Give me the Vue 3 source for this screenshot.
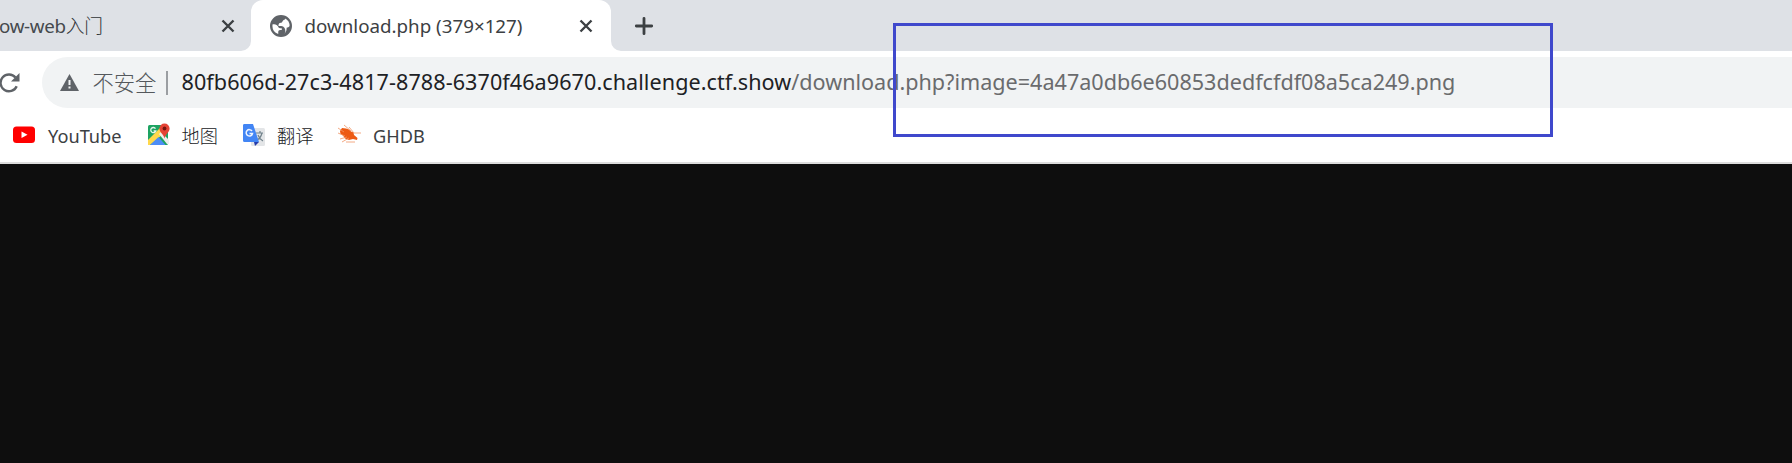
<script setup>
const bookmarks = [
  { id: 'youtube', label: 'YouTube' },
  { id: 'maps', label: '地图' },
  { id: 'translate', label: '翻译' },
  { id: 'ghdb', label: 'GHDB' },
]
</script>

<template>
  <div class="browser">
    <header class="tabs">
      <div class="tab inactive">
        <span class="title prev">ow-web<span class="cjk">入门</span></span>
        <svg class="close" viewBox="0 0 14 14"><path d="M1.500 1.500l11 11M12.500 1.500l-11 11" /></svg>
      </div>
      <div class="tab active">
        <svg class="curve left" viewBox="0 0 10 10"><path d="M10 0V10H0A10 10 0 0 0 10 0Z" /></svg>
        <svg class="globe" viewBox="2 2 20 20"><path d="M12 2a10 10 0 1 0 0 20 10 10 0 0 0 0-20ZM4.200 12c0-.6.100-1.200.2-1.700 2 0 3.300 0 4.600 1.700.8 1 .6 2 2.300 2h1.400v1.700c-1.800 0-3.200.2-3.200 1.500v2.100A7.800 7.800 0 0 1 4.200 12Zm9.400 7.600c1.200-.2 2.400-1.200 2.400-2.800 0-2.600-1.200-4.600-3.800-4.800h-2.500c0-2 .6-2.800 2.200-2.900 1.700 0 1.300-1.900 2.500-2.500.8-.4 1.500-.4 1.500-1.400A7.800 7.800 0 0 1 19.800 12c-.7 1-1.600 1.500-2.700 1.500 0 2.500-.4 4.700-3.500 6.100Z" /></svg>
        <span class="title current">download.php (379×127)</span>
        <svg class="close" viewBox="0 0 14 14"><path d="M1.500 1.500l11 11M12.500 1.500l-11 11" /></svg>
        <svg class="curve right" viewBox="0 0 10 10"><path d="M0 0V10H10A10 10 0 0 1 0 0Z" /></svg>
      </div>
      <svg class="plus" viewBox="0 0 18 18"><path d="M9 1.300V16.700M1.300 9H16.700" /></svg>
    </header>

    <div class="toolbar">
      <svg class="reload" viewBox="0 0 22 22"><path class="arc" d="M18.700 14.200A8.400 8.400 0 1 1 17.500 5.600" /><path class="tip" d="M21.500 1V9.500H13Z" /></svg>
      <div class="omnibox">
        <svg class="warning" viewBox="0 0 19 17"><path d="M9.500 0L19 17H0Z" /><path class="mark" d="M8.500 6h2v5h-2ZM8.500 12.500h2v2h-2Z" /></svg>
        <span class="insecure">不安全</span>
        <i class="divider"></i>
        <span class="url"><span class="host">80fb606d-27c3-4817-8788-6370f46a9670.challenge.ctf.show</span><span class="path">/download.php?image=4a47a0db6e60853dedfcfdf08a5ca249.png</span></span>
      </div>
    </div>

    <nav class="bookmarks">
      <div v-for="b in bookmarks" :key="b.id" class="bookmark" :class="b.id">
        <svg v-if="b.id === 'youtube'" viewBox="0 0 24 24"><rect x="1" y="3.500" width="22" height="16.500" rx="3.500" fill="#f00" /><path d="M9.500 8.400L15.500 11.700L9.500 15Z" fill="#fff" /></svg>
        <svg v-else-if="b.id === 'maps'" viewBox="0 0 24 24">
          <rect x="1" y="2" width="20" height="20" rx="1.500" fill="#1da362" />
          <path d="M1 17L16 2H21V7L3 22H1Z" fill="#ffd84b" />
          <path d="M12 11L14 9L22 17V21H20Z" fill="#eee" />
          <path d="M3 22L11.500 14L18.500 22Z" fill="#4d8df6" />
          <path d="M8.500 5.600A2.600 2.600 0 1 0 8.800 8H6.600" fill="none" stroke="#e4f6ec" stroke-width="1.300" />
          <path d="M17.500 .5a5.100 5.100 0 0 0-5.100 5.100c0 3.800 4 5.400 5.100 9.900 1.100-4.500 5.100-6.100 5.100-9.900A5.100 5.100 0 0 0 17.500.5Z" fill="#e54335" />
          <circle cx="17.500" cy="5.500" r="1.900" fill="#74150f" />
        </svg>
        <svg v-else-if="b.id === 'translate'" viewBox="0 0 24 24">
          <rect x="9" y="5" width="14" height="18" rx="1.500" fill="#e3e5e7" />
          <path d="M14 10h7M18 8v2M20 10c-1 4-3 6-5 7M16 12c1 3 3 5 5 6" fill="none" stroke="#71828b" stroke-width="1.200" />
          <path d="M12 19H17L13 23Z" fill="#263caa" />
          <path d="M2 1H11L17 19H2.500A1.500 1.500 0 0 1 1 17.500V2.500A1.500 1.500 0 0 1 2 1Z" fill="#4285f4" />
          <path d="M10 8A3.200 3.200 0 1 0 10.500 10.500H7.500" fill="none" stroke="#edf4ff" stroke-width="1.500" />
        </svg>
        <svg v-else viewBox="0 0 24 24">
          <path d="M3 8L5 5L9 5.500L12 6.500L14 8.500L16.500 9.500L17 12L20.500 15L20 17L16 16L12 17L8 15.500L6 12.500L3.500 11Z" fill="#ed5a13" />
          <path d="M1 5L7 9M7 2L14 8M12 4L17 10H24M1 10L8 13M3 16L10 14M5 19L12 15M9 19H18" fill="none" stroke="#f09465" stroke-width=".8" />
        </svg>
        <span>{{ b.label }}</span>
      </div>
    </nav>
    <main class="viewport"></main>
    <div class="highlight"></div>
  </div>
</template>

<style>
body { overflow: hidden; }
</style>

<style scoped>
* { box-sizing: border-box; }
.browser {
  position: relative;
  width: 1792px;
  height: 463px;
  display: flex;
  flex-direction: column;
  overflow: hidden;
  background: #fff;
  font-family: "Noto Sans", "Open Sans", "Noto Sans CJK SC", sans-serif;
  color: #3c4043;
  white-space: nowrap;
}
svg { display: block; flex: none; overflow: visible; }
.tabs { display: flex; height: 51px; flex: none; background: #dee1e6; }
.tab { display: flex; align-items: center; height: 51px; position: relative; }
.inactive { width: 251px; }
.active { width: 360px; background: #fff; border-radius: 12px 12px 0 0; padding-left: 19px; }
.title { font-size: 18.75px; line-height: 28px; }
.prev { width: 222px; margin-left: -1px; color: #45494d; letter-spacing: -0.3px; }
.cjk { font-weight: 300; color: #303437; }
.current { width: 256.500px; margin-left: 12.500px; margin-right: 18px; }
.close { width: 14px; height: 14px; fill: none; stroke: #3c4043; stroke-width: 2.4; }
.curve { position: absolute; width: 10px; height: 10px; bottom: 0; fill: #fff; }
.left { left: -10px; }
.right { right: -10px; }
.globe { width: 22px; height: 22px; fill: #5f6368; }
.plus { width: 18px; height: 18px; margin: 17px 0 0 23.500px; fill: none; stroke: #3c4043; stroke-width: 2.8; stroke-linecap: round; }
.toolbar { display: flex; height: 57px; padding-top: 6px; flex: none; }
.reload { width: 22px; height: 22px; margin: 15px 22px 0 -2px; }
.arc { fill: none; stroke: #5f6368; stroke-width: 2.4; }
.tip { fill: #5f6368; }
.omnibox { display: flex; flex: 1; align-items: center; height: 51px; padding-left: 18px; background: #f1f3f4; border-radius: 25.5px 0 0 25.5px; }
.warning { width: 19px; height: 17px; fill: #5f6368; }
.mark { fill: #f1f3f4; }
.insecure { width: 64px; margin-left: 13.500px; margin-right: .5px; padding-bottom: 3px; font-size: 21.300px; font-weight: 300; color: #54585c; }
.divider { width: 2px; height: 24px; margin: 0 13.500px 0 9px; background: #9b9ea2; }
.url { padding-bottom: 2px; font-size: 21.59px; line-height: 30px; }
.host { color: #202124; letter-spacing: .065px; }
.path { color: #6a6b6d; }
.bookmarks { display: flex; align-items: center; height: 56px; flex: none; border-bottom: 2px solid #dcdcdc; }
.bookmark { display: flex; align-items: center; gap: 12px; font-size: 18.2px; line-height: 26px; }
.bookmark svg { width: 24px; height: 24px; }
.bookmark span { padding-top: 2px; }
.youtube { width: 147px; padding-left: 12px; }
.maps { width: 95px; gap: 10.500px; font-weight: 300; color: #202124; }
.translate { width: 95px; gap: 11px; font-weight: 300; color: #202124; }
.viewport { flex: 1; background: #0e0e0e; }
.highlight { position: absolute; left: 893px; top: 23px; width: 660px; height: 114px; border: 3px solid #3f48cc; }
</style>
